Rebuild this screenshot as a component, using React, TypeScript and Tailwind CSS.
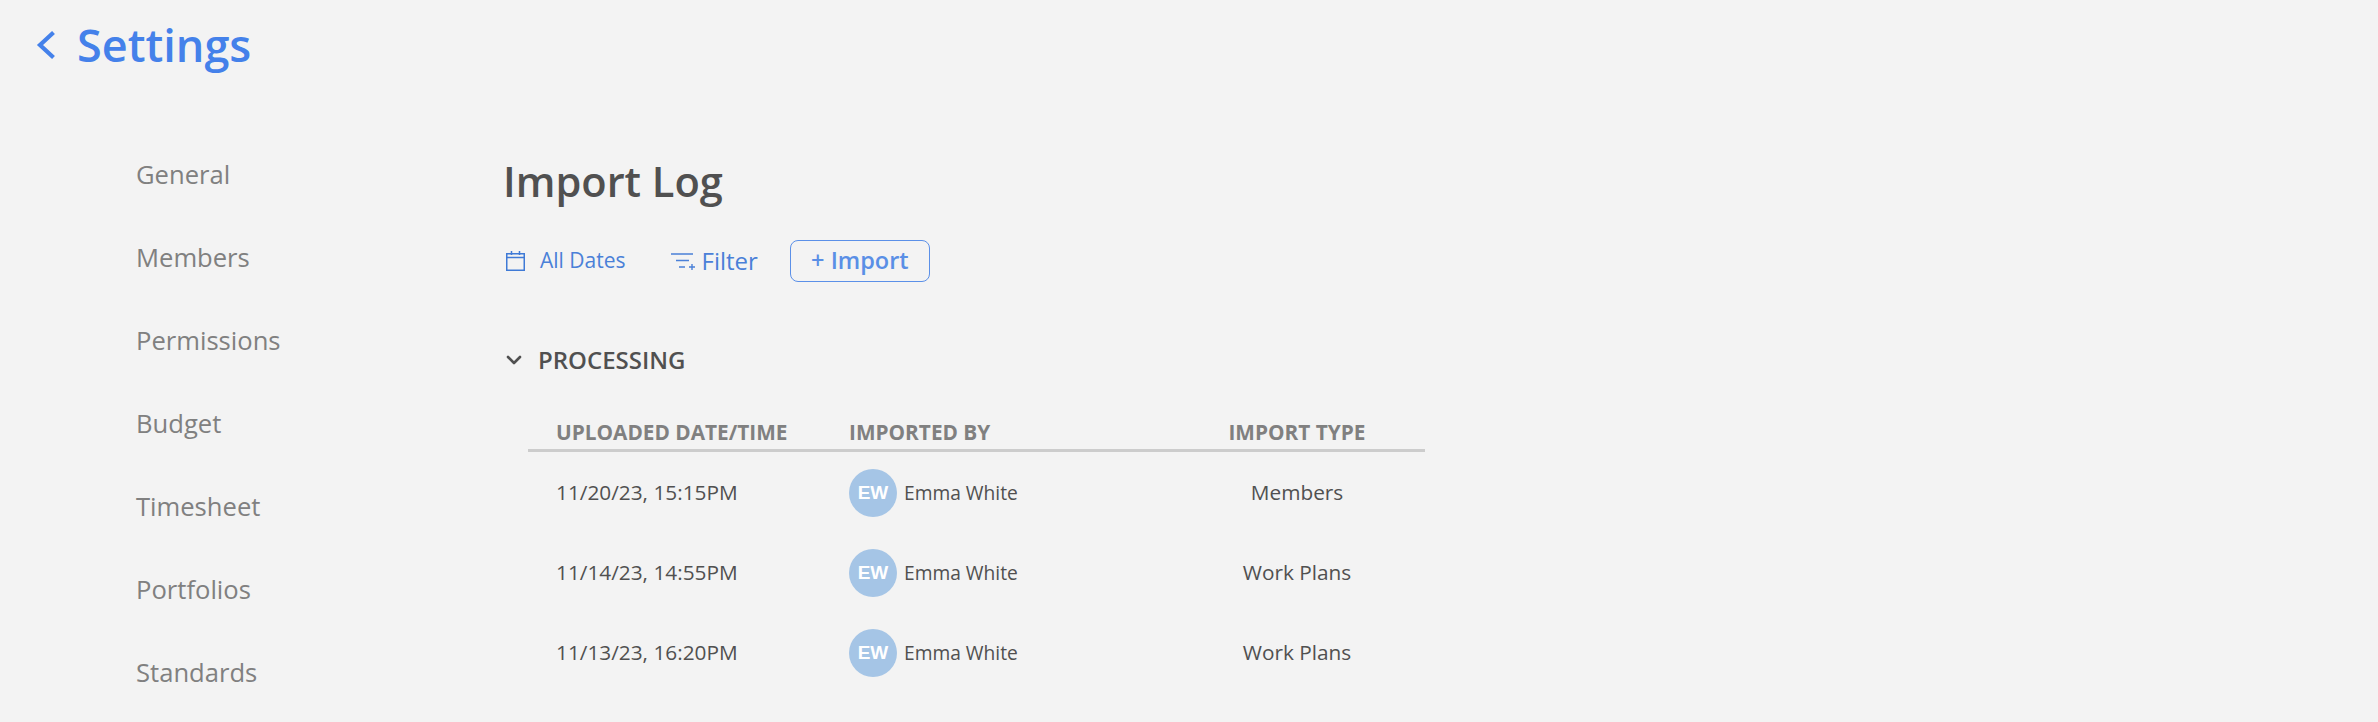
import React from 'react';
import { ChevronDown } from 'lucide-react';

const navItems = ['General', 'Members', 'Permissions', 'Budget', 'Timesheet', 'Portfolios', 'Standards'];

const rows = [
  { date: '11/20/23, 15:15PM', type: 'Members' },
  { date: '11/14/23, 14:55PM', type: 'Work Plans' },
  { date: '11/13/23, 16:20PM', type: 'Work Plans' },
];

function BackIcon() {
  return (
    <svg width="20" height="30" viewBox="0 0 20 30" fill="none" stroke="#4481ea" strokeWidth="4.2">
      <path d="M17.5 2.5 4 15l13.5 12.5" />
    </svg>
  );
}

function CalendarIcon() {
  return (
    <svg width="20" height="20" viewBox="0 0 20 20" fill="none" stroke="#3f7ad6" strokeWidth="1.5">
      <rect x=".75" y="2.75" width="17.5" height="16.5" />
      <path d="M.75 6.5h17.5M5.5 0v4M13.5 0v4" />
    </svg>
  );
}

function FilterIcon() {
  return (
    <svg width="25" height="20" viewBox="0 0 25 20" fill="none" stroke="#4a80d8" strokeWidth="1.4">
      <path d="M0 3h22M5 9.5h13M8 16h6M18 16h6M21 13v6" />
    </svg>
  );
}

export default function App() {
  return (
    <div className="h-[722px] w-[2378px] overflow-hidden bg-[#f3f3f3] font-['Open_Sans',sans-serif]">
      {/* Header */}
      <header className="flex h-[89px] items-center pl-[36px]">
        <BackIcon />
        <h1 className="ml-[21px] text-[45px] font-semibold leading-none text-[#4481ea]">Settings</h1>
      </header>

      <div className="flex">
        {/* Left nav */}
        <nav className="flex w-[503px] flex-col pl-[136px] pt-[45px]">
          {navItems.map((item) => (
            <div key={item} className="flex h-[83px] items-center text-[25.6px] text-[#808080]">
              {item}
            </div>
          ))}
        </nav>

        {/* Main */}
        <main className="flex-1 pt-[61px]">
          <h2 className="text-[41.6px] font-semibold leading-[62px] text-[#505050]">Import Log</h2>

          <div className="mt-[28px] flex h-[42px] items-center text-[#4a80d8]">
            <span className="ml-[3px]"><CalendarIcon /></span>
            <span className="ml-[14px] text-[21px]">All Dates</span>
            <span className="ml-[45px]"><FilterIcon /></span>
            <span className="ml-[6px] text-[24px]">Filter</span>
            <button className="ml-[32px] flex h-[42px] w-[140px] items-center justify-center rounded-[8px] border border-[#5b90e8] text-[23.5px] font-semibold text-[#5a8fe6]">
              + Import
            </button>
          </div>

          <div className="mt-[58px] flex h-[40px] items-center text-[#505050]">
            <ChevronDown size={24} strokeWidth={2.6} className="-ml-[1px]" />
            <span className="ml-[12px] text-[24px] font-semibold">PROCESSING</span>
          </div>

          <div className="ml-[25px] mt-[37px] w-[897px]">
            <div className="grid h-[35px] grid-cols-[321px_320px_256px] items-center border-b-[3px] border-[#cccccc] pb-[6px] text-[20.8px] font-bold text-[#808080]">
              <div className="pl-[28px]">UPLOADED DATE/TIME</div>
              <div>IMPORTED BY</div>
              <div className="text-center">IMPORT TYPE</div>
            </div>
            <div className="pt-[1px]">
              {rows.map((row) => (
                <div key={row.date} className="grid h-[80px] grid-cols-[321px_320px_256px] items-center text-[20.8px] text-[#505050]">
                  <div className="pl-[28px]">{row.date}</div>
                  <div className="flex items-center gap-[7px]">
                    <div className="flex h-[48px] w-[48px] items-center justify-center rounded-full bg-[#a5c5e6] font-['Liberation_Sans',sans-serif] text-[19px] font-bold text-white">
                      EW
                    </div>
                    <span className="text-[19.2px]">Emma White</span>
                  </div>
                  <div className="text-center">{row.type}</div>
                </div>
              ))}
            </div>
          </div>
        </main>
      </div>
    </div>
  );
}
